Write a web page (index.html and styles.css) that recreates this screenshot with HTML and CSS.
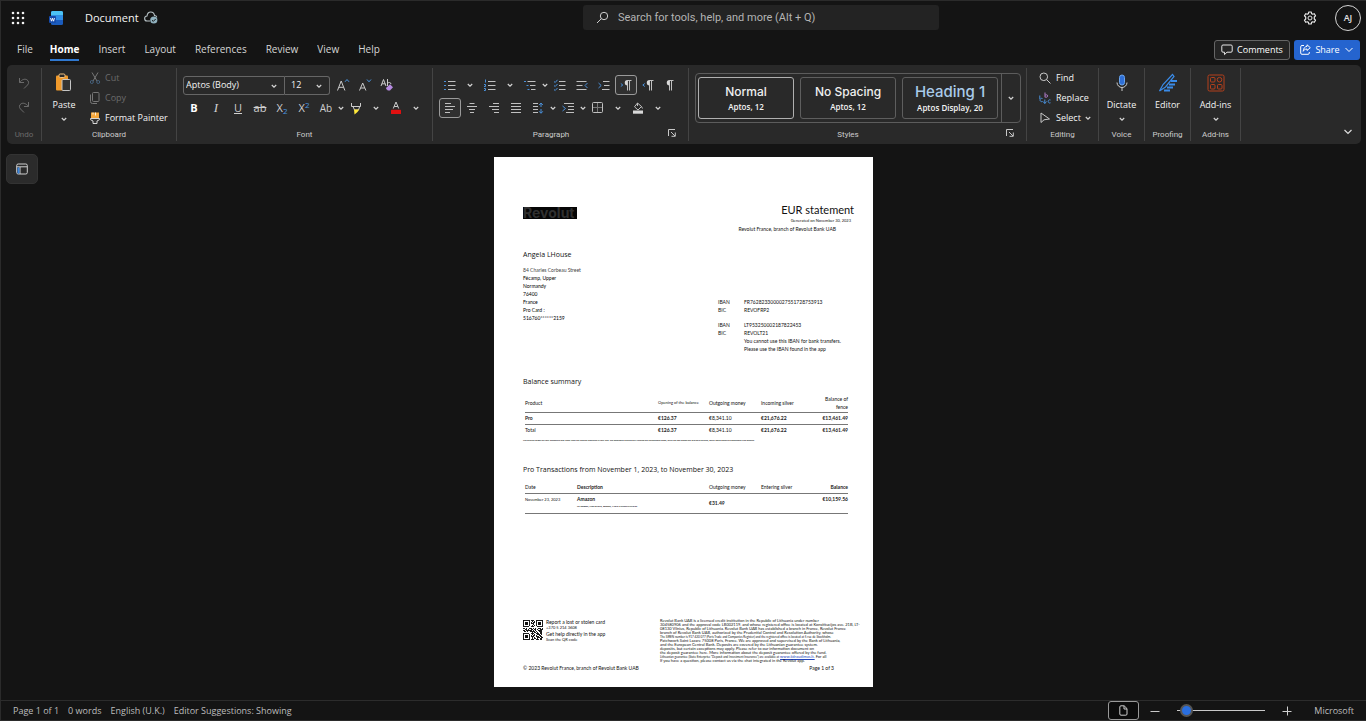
FILE: index.html
```html
<!DOCTYPE html>
<html lang="en">
<head>
<meta charset="utf-8">
<title>Document</title>
<link rel="stylesheet" href="styles.css">
</head>
<body>
<svg class="defs" aria-hidden="true">
  <symbol id="chev" viewBox="0 0 8 8"><path d="M1.8 3 4 5.200 6.200 3" fill="none" stroke="#d6d6d6" stroke-width="1.2"/></symbol>
  <symbol id="launch" viewBox="0 0 8 8"><path d="M7 .5H.5V7M3 3l4 4M7.3 3.5v3.8H3.5" fill="none" stroke="#c8c8c8"/></symbol>
</svg>

<div class="app">
  <header class="topbar">
    <div class="brand">
      <button class="plain" aria-label="App launcher"><svg width="14" height="14" viewBox="0 0 14 14" fill="#f2f2f2"><circle cx="2" cy="2" r="1.3"/><circle cx="7" cy="2" r="1.3"/><circle cx="12" cy="2" r="1.3"/><circle cx="2" cy="7" r="1.3"/><circle cx="7" cy="7" r="1.3"/><circle cx="12" cy="7" r="1.3"/><circle cx="2" cy="12" r="1.3"/><circle cx="7" cy="12" r="1.3"/><circle cx="12" cy="12" r="1.3"/></svg></button>
      <svg class="word" width="16" height="16" viewBox="0 0 16 16"><rect x="3" y="1" width="12" height="14" rx="1.5" fill="#1b5cbd"/><path d="M4.500 1H13.500A1.500 1.500 0 0 1 15 2.500V5.500H3V2.500A1.500 1.500 0 0 1 4.500 1Z" fill="#4cc3f5"/><rect x="3" y="5.500" width="12" height="4.500" fill="#2f8ee8"/><rect x="1" y="6" width="7" height="7" rx="1" fill="#164bab"/><path d="M2.500 8l1 3.200 1-3 1 3 1-3.200" fill="none" stroke="#fff" stroke-width=".9"/></svg>
      <span class="doc-name">Document</span>
      <svg class="cloud" width="14" height="13" viewBox="0 0 14 13"><path d="M6 10H3.300A2.500 2.500 0 0 1 3 5C3.300 2.500 4.800 1 6.800 1S10.200 2.500 10.500 4.500c1.200 0 2 .7 2.300 1.800" fill="none" stroke="#b9c4c8" stroke-width="1.1"/><circle cx="9.800" cy="9" r="3.600" fill="#8fb0bd"/><path d="M8 9.200l1.300 1.200L11.700 8" fill="none" stroke="#141414"/></svg>
    </div>
    <label class="search"><svg width="13" height="13" viewBox="0 0 13 13" fill="none" stroke="#cfcfcf"><circle cx="8" cy="5" r="3.700"/><path d="M5.300 7.700 1 12"/></svg><input type="search" aria-label="Search" placeholder="Search for tools, help, and more (Alt + Q)"></label>
    <div class="account">
      <button class="plain" aria-label="Settings"><svg width="14" height="14" viewBox="0 0 14 14" fill="none" stroke="#e8e8e8"><path stroke-width="1.200" stroke-linejoin="round" d="M5.800 1h2.400l.4 1.600 1.100.6 1.600-.5 1.200 2.100-1.200 1.200v2l1.200 1.200-1.200 2.100-1.600-.5-1.100.6L8.200 13H5.800l-.4-1.600-1.100-.6-1.600.5-1.200-2.100L2.700 8V6L1.500 4.800l1.200-2.100 1.600.5 1.100-.6z"/><circle cx="7" cy="7" r="2"/></svg></button>
      <button class="avatar">AJ</button>
    </div>
  </header>

  <nav class="tabs">
    <button>File</button><button class="on">Home</button><button>Insert</button><button>Layout</button><button>References</button><button>Review</button><button>View</button><button>Help</button>
    <span class="tab-actions">
      <button class="comments"><svg width="12" height="12" viewBox="0 0 12 12" fill="none" stroke="#e6e6e6"><path d="M2 1h8a1.200 1.200 0 0 1 1.200 1.200V7A1.200 1.200 0 0 1 10 8.200H6L3.500 10.600V8.200H2A1.200 1.200 0 0 1 .8 7V2.200A1.200 1.200 0 0 1 2 1z"/></svg>Comments</button>
      <button class="share"><svg width="11" height="11" viewBox="0 0 11 11" fill="none" stroke="#fff"><path d="M4 1.500H2A1.300 1.300 0 0 0 .7 2.800V9A1.300 1.300 0 0 0 2 10.300H8A1.300 1.300 0 0 0 9.300 9V8M7 .8l3.300 2.900L7 6.500V5C5.200 5 4 5.700 3.200 7.300 3.400 4.500 4.700 2.600 7 2.400z"/></svg>Share<svg width="10" height="8" viewBox="0 0 10 8"><path d="M1.500 2 5 5.500 8.500 2" fill="none" stroke="#fff"/></svg></button>
    </span>
  </nav>

  <section class="ribbon" aria-label="Home ribbon">
    <div class="group g-undo">
      <div class="body col">
        <button class="ic tall" aria-label="Undo" disabled><svg width="12" height="12" viewBox="0 0 12 12" fill="none" stroke="#6b6b6b"><path d="M1.500 1v4.500H6M1.500 5.500C4 2.500 6.500 1.500 8.800 2.700c2.200 1.200 2.300 3.800.7 5.300L6 11.500"/></svg></button>
        <button class="ic tall" aria-label="Redo" disabled><svg width="12" height="12" viewBox="0 0 12 12" fill="none" stroke="#6b6b6b"><path d="M10.500 1v4.500H6M10.500 5.500C8 2.500 5.500 1.500 3.200 2.700 1 3.900.9 6.500 2.500 8L6 11.500"/></svg></button>
      </div>
      <div class="label dim">Undo</div>
    </div>

    <div class="group g-clip">
      <div class="body row">
        <button class="big"><svg width="18" height="20" viewBox="0 0 18 20"><rect x="1" y="2.500" width="12" height="15" rx="1" fill="#f09a2b"/><rect x="4" y="1" width="6" height="3.500" rx="1.200" fill="#2a2a2a" stroke="#f6c480"/><rect x="7" y="6.500" width="8.500" height="11" rx="1" fill="#333" stroke="#c6c6c6"/></svg><span>Paste</span><svg class="cv"><use href="#chev"/></svg></button>
        <div class="stack">
          <button disabled><svg width="12" height="12" viewBox="0 0 12 12" fill="none"><path d="M3 .5 8 9M9 .5 4 9" stroke="#777"/><circle cx="2.800" cy="10" r="1.500" stroke="#45617d"/><circle cx="9.200" cy="10" r="1.500" stroke="#45617d"/></svg>Cut</button>
          <button disabled><svg width="12" height="12" viewBox="0 0 12 12" fill="none" stroke="#777"><rect x="3.500" y=".5" width="6.500" height="9" rx="1"/><path d="M1.500 2.500v7a2 2 0 0 0 2 2H8"/></svg>Copy</button>
          <button><svg width="12" height="12" viewBox="0 0 12 12"><path d="M2 .5h8v6H2z" fill="#f5a73c"/><path d="M4 .5v2M6.500.5v3" stroke="#fff0d8"/><path d="M1.500 6.500h9v1.200L8 9v2.500H4V9L1.500 7.700z" fill="#333" stroke="#d5d5d5"/></svg>Format Painter</button>
        </div>
      </div>
      <div class="label">Clipboard</div>
    </div>

    <div class="group g-font">
      <div class="body tools">
        <div class="line">
          <span class="combo family"><select aria-label="Font"><option>Aptos (Body)</option></select><svg class="cv"><use href="#chev"/></svg></span><span class="combo size"><select aria-label="Font size"><option>12</option></select><svg class="cv"><use href="#chev"/></svg></span>
          <button class="ic" aria-label="Grow font"><svg width="14" height="14" viewBox="0 0 14 14" fill="none"><path d="M1.500 12.500 5.200 3l3.700 9.500M2.800 9.300h4.800" stroke="#ccc"/><path d="M9 3.800l2-2.300 2 2.300" stroke="#4a96e0"/></svg></button>
          <button class="ic" aria-label="Shrink font"><svg width="14" height="14" viewBox="0 0 14 14" fill="none"><path d="M1.500 12.500 4.700 5l3.200 7.500M2.800 10h3.900" stroke="#ccc"/><path d="M9 1.500l2 2.300 2-2.300" stroke="#4a96e0"/></svg></button>
          <button class="ic" aria-label="Clear formatting"><svg width="14" height="14" viewBox="0 0 14 14" fill="none"><path d="M1 8 3.500 1.500 6 8M2 5.800h3.200M7.500 1v7M7.500 5.500c.6-1.300 3.500-1.500 3.500.6" stroke="#ccc"/><path d="M6.500 9.500l3.500-3.300 3 3-3 3.300H7.800L6 10.700z" fill="#b58ae0"/></svg></button>
        </div>
        <div class="line">
          <button class="ic glyph b">B</button><button class="ic glyph i">I</button><button class="ic glyph u">U</button><button class="ic glyph s">ab</button><button class="ic glyph">X<sub>2</sub></button><button class="ic glyph">X<sup>2</sup></button><button class="ic glyph ab">Ab</button><button class="dn" aria-label="Change case"><svg class="cv"><use href="#chev"/></svg></button>
          <button class="ic" aria-label="Highlight"><svg width="13" height="13" viewBox="0 0 13 13" fill="none"><path d="M1.500 1v3.500h9V1M3 4.500 4.500 8h4l1.200-3.500" stroke="#ccc"/><path d="M4 7.500h5.200L7.500 10 4.500 12.500z" fill="#ffe83a"/></svg></button><button class="dn wide" aria-label="Highlight colours"><svg class="cv"><use href="#chev"/></svg></button>
          <button class="ic" aria-label="Font colour"><svg width="12" height="14" viewBox="0 0 12 14"><path d="M3.300 7.500 6 1l2.700 6.500M4.200 5.500h3.600" fill="none" stroke="#ccc"/><rect x="1" y="8.800" width="10" height="4.200" rx=".5" fill="#e01010"/></svg></button><button class="dn wide" aria-label="Font colours"><svg class="cv"><use href="#chev"/></svg></button>
        </div>
      </div>
      <div class="label">Font</div>
    </div>

    <div class="group g-para">
      <div class="body tools">
        <div class="line">
          <button class="ic" aria-label="Bullets"><svg class="g"><path d="M4 2.500h7.500M4 6.500h7.500M4 10.500h7.500"/><path class="bl" d="M0 2.500h2M0 6.500h2M0 10.500h2"/></svg></button><button class="dn wide" aria-label="Bullet styles"><svg class="cv"><use href="#chev"/></svg></button>
          <button class="ic" aria-label="Numbering"><svg class="g"><path d="M4 2.500h7.500M4 6.500h7.500M4 10.500h7.500"/><path class="bl" d="M1.500 .5v3M0 5.500h1.500v2H0M0 9.500h1.500v2H0"/></svg></button><button class="dn wide" aria-label="Number styles"><svg class="cv"><use href="#chev"/></svg></button>
          <button class="ic" aria-label="Multilevel list"><svg class="g"><path d="M3.500 2.500h8M6 6.500h5.500M7 10.500h4.500"/><path class="bl" d="M0 2.500h2M2.500 6.500h2M3.500 10.500h2"/></svg></button><button class="dn" aria-label="List styles"><svg class="cv"><use href="#chev"/></svg></button>
          <button class="ic" aria-label="Checklist"><svg class="g"><path d="M5 2.500h6.500M5 6.500h6.500M5 10.500h6.500"/><path class="bl" d="M0 2.500l1.200 1L3.500.8M0 6.500l1.200 1L3.500 5M0 10.500l1.200 1L3.500 9"/></svg></button>
          <button class="ic" aria-label="Decrease indent"><svg class="g"><path d="M.5 2.500h10M.5 6.500h6M.5 10.500h10"/><path class="bl" d="M11.500 4 9 6.500 11.500 9"/></svg></button>
          <button class="ic" aria-label="Increase indent"><svg class="g"><path d="M5 2.500h6.500M6 6.500h5.500M4 10.500h7.500"/><path class="bl" d="M.5 4 3.200 6.500.5 9"/></svg></button>
          <button class="ic sel" aria-label="Left to right"><svg class="g"><path d="M7.500 11.500v-10M9.500 11.500v-10M11.500 1.500H7"/><path class="fl" d="M7.500 1a2.700 2.700 0 0 0 0 5.500z"/><path class="bl" d="M.8 4.500 2.800 6 .8 7.500"/></svg></button>
          <button class="ic" aria-label="Right to left"><svg class="g"><path d="M7.500 11.500v-10M9.500 11.500v-10M11.500 1.500H7"/><path class="fl" d="M7.500 1a2.700 2.700 0 0 0 0 5.500z"/><path class="bl" d="M2.800 4.500.8 6l2 1.500"/></svg></button>
          <button class="ic" aria-label="Show marks"><svg class="g"><path d="M5.500 11.500v-10M7.500 11.500v-10M9.500 1.500H5"/><path class="fl" d="M5.500 1a2.700 2.700 0 0 0 0 5.500z"/></svg></button>
        </div>
        <div class="line">
          <button class="ic sel" aria-label="Align left"><svg class="g"><path d="M1 1.500h6M1 4.500h10M1 7.500h8M1 10.500h5"/></svg></button><button class="ic" aria-label="Centre"><svg class="g"><path d="M3.500 1.500h5M1 4.500h10M3 7.500h6M4 10.500h4"/></svg></button><button class="ic" aria-label="Align right"><svg class="g"><path d="M5 1.500h6M1 4.500h10M4 7.500h7M6 10.500h5"/></svg></button><button class="ic" aria-label="Justify"><svg class="g"><path d="M1 1.500h10M1 4.500h10M1 7.500h10M1 10.500h10"/></svg></button>
          <button class="ic" aria-label="Line spacing"><svg class="g"><path d="M1 1.500h5M1 4.500h5M1 7.500h5M1 10.500h5"/><path class="bl" d="M9 1.500V5M9 7v4M7.200 3 9 1l1.800 2M7.200 9.300 9 11.300l1.800-2"/></svg></button><button class="dn" aria-label="Spacing options"><svg class="cv"><use href="#chev"/></svg></button>
          <button class="ic" aria-label="Indent"><svg class="g"><path d="M2 1.500h10M6 4.500h6M6 7.500h6M4 10.500h8"/><path class="bl" d="M.5 4 3.500 6.500.5 9"/></svg></button><button class="dn" aria-label="Indent options"><svg class="cv"><use href="#chev"/></svg></button>
          <button class="ic" aria-label="Borders"><svg class="g"><rect x=".5" y=".5" width="10" height="10" rx="1"/><path d="M5.500 1v9M1 5.500h9" stroke="#777"/></svg></button><button class="dn wide" aria-label="Border styles"><svg class="cv"><use href="#chev"/></svg></button>
          <button class="ic" aria-label="Shading"><svg class="g"><path d="M5.500 1 9.500 4.500 6 8 2.500 4.800zM5.500 1v3M9.500 4.500l1 2"/><path class="fl" d="M1 8.500h10v3.200H1z"/></svg></button><button class="dn wide" aria-label="Shading colours"><svg class="cv"><use href="#chev"/></svg></button>
        </div>
      </div>
      <div class="label">Paragraph</div>
      <button class="launch" aria-label="Paragraph settings"><svg><use href="#launch"/></svg></button>
    </div>

    <div class="group g-styles">
      <div class="body gallery-wrap">
        <div class="gallery">
          <button class="style cur"><b>Normal</b><small>Aptos, 12</small></button>
          <button class="style"><b>No Spacing</b><small>Aptos, 12</small></button>
          <button class="style head"><b>Heading 1</b><small>Aptos Display, 20</small></button>
          <button class="more" aria-label="More styles"><svg class="cv"><use href="#chev"/></svg></button>
        </div>
      </div>
      <div class="label">Styles</div>
      <button class="launch" aria-label="Style settings"><svg><use href="#launch"/></svg></button>
    </div>

    <div class="group g-edit">
      <div class="body stack">
        <button><svg width="12" height="12" viewBox="0 0 12 12" fill="none" stroke="#c8c8c8"><circle cx="4.800" cy="4.800" r="3.800"/><path d="M7.500 7.500l4 4"/></svg>Find</button>
        <button><svg width="12" height="12" viewBox="0 0 12 12" fill="none"><path d="M6 .5v4.800M6 3.500c.5-1 2.700-1 2.700.4S6.500 5.700 6 4.700" stroke="#b07cc8"/><path d="M3.500 6.500a1.700 1.700 0 1 0 0 3M.8 3.500V7M5.800 7.500v4M4 9.500l1.800 2 1.700-2M11.500 8a1.600 1.600 0 1 0 0 2.800" stroke="#4a90d9"/></svg>Replace</button>
        <button><svg width="12" height="12" viewBox="0 0 12 12" fill="none" stroke="#c8c8c8"><path d="M2 1v9.500l3-2.700 5.500-.8z"/></svg>Select<svg class="cv"><use href="#chev"/></svg></button>
      </div>
      <div class="label">Editing</div>
    </div>
    <div class="group g-big">
      <div class="body"><button class="big"><svg width="18" height="20" viewBox="0 0 18 20" fill="none"><rect x="6.500" y="2" width="5" height="10" rx="2.500" fill="#2f6fd6" stroke="#6aa5ee"/><path d="M4 9.500a5 5 0 0 0 10 0M9 14.500V18" stroke="#ccc"/></svg><span>Dictate</span><svg class="cv"><use href="#chev"/></svg></button></div>
      <div class="label">Voice</div>
    </div>
    <div class="group g-big">
      <div class="body"><button class="big"><svg width="20" height="20" viewBox="0 0 20 20" fill="none"><path d="M1.500 18 5 11.500 14.500 1.500l1.500 2-8.500 10.500zM1.500 18l6-4" stroke="#3a8be8" stroke-width="1.200"/><path d="M13 8h6M11 11.500h6M9 14.500h6M6 17.500h6" stroke="#3a8be8" stroke-width="2"/></svg><span>Editor</span></button></div>
      <div class="label">Proofing</div>
    </div>
    <div class="group g-add">
      <div class="body"><button class="big"><svg width="18" height="20" viewBox="0 0 18 20" fill="none" stroke="#b5401c"><rect x="1" y="2" width="16" height="16" rx="1.500"/><rect x="3.500" y="4.500" width="4.500" height="4.500" rx="1"/><circle cx="12.500" cy="6.700" r="2.300"/><rect x="3.500" y="11.500" width="4.500" height="4.500" rx="1"/><rect x="10.500" y="11.500" width="4.500" height="4.500" rx="1"/></svg><span>Add-ins</span><svg class="cv"><use href="#chev"/></svg></button></div>
      <div class="label">Add-ins</div>
    </div>
    <button class="collapse" aria-label="Collapse ribbon"><svg width="10" height="8" viewBox="0 0 10 8"><path d="M1.500 2 5 5.500 8.500 2" fill="none" stroke="#ddd" stroke-width="1.200"/></svg></button>
  </section>

  <main class="canvas">
    <button class="nav-pane" aria-label="Navigation"><svg width="12" height="12" viewBox="0 0 12 12" fill="none"><rect x=".7" y="1" width="10.600" height="10" rx="1.500" stroke="#d0d0d0"/><path d="M1 3.800h10M4 4v7" stroke="#d0d0d0"/><path d="M2.500 4.500v6" stroke="#3a86e0" stroke-width="2"/></svg></button>
    <article class="page">
      <div class="letterhead">
        <div class="logo">Revolut</div>
        <div class="title"><h1>EUR statement</h1><p class="gen">Generated on November 30, 2023</p><p class="branch">Revolut France, branch of Revolut Bank UAB</p></div>
      </div>
      <h2>Angela LHouse</h2>
      <div class="parties">
        <address><span class="lt">84 Charles Corbeau Street</span><br>Fécamp, Upper<br>Normandy<br>76400<br>France<br>Pro Card :<br>516760******2159</address>
        <dl><dt>IBAN</dt><dd>FR7628233000027551728753913</dd><dt>BIC</dt><dd>REVOFRP2</dd><dt class="gap">IBAN</dt><dd class="gap">LT953250002187822453</dd><dt>BIC</dt><dd>REVOLT21<br>You cannot use this IBAN for bank transfers.<br>Please use the IBAN found in the app</dd></dl>
      </div>
      <h2 class="sum">Balance summary</h2>
      <table class="t1">
        <colgroup><col class="c1"><col class="c2"><col class="c3"><col class="c4"><col></colgroup>
        <thead><tr><th>Product</th><th class="tight">Opening of the balance</th><th>Outgoing money</th><th>Incoming silver</th><th class="r">Balance of<br>fence</th></tr></thead>
        <tbody><tr><td class="m">Pro</td><td class="m">€126.37</td><td>€8,341.10</td><td class="m">€21,676.22</td><td class="r m">€13,461.49</td></tr>
        <tr><td>Total</td><td class="m">€126.37</td><td>€8,341.10</td><td class="m">€21,676.22</td><td class="r m">€13,461.49</td></tr></tbody>
      </table>
      <p class="note">The balance shown on your statement may differ from the balance displayed in your app. The statement balance only reflects the transactions made, while the app shows the available balance, which takes pending transactions into account.</p>
      <h2 class="tx">Pro Transactions from November 1, 2023, to November 30, 2023</h2>
      <table class="t2">
        <colgroup><col class="d1"><col class="d2"><col class="c3"><col class="c4"><col></colgroup>
        <thead><tr><th>Date</th><th class="m">Description</th><th>Outgoing money</th><th>Entering silver</th><th class="r m">Balance</th></tr></thead>
        <tbody><tr><td class="date">November 23, 2023</td><td class="m">Amazon<small>To: amazon, F75018 Paris, amazon, F Card: 516760******2159</small></td><td class="m mid">€31.49</td><td></td><td class="r m">€10,159.56</td></tr></tbody>
      </table>
      <footer class="foot">
        <svg class="qr" viewBox="0 0 21 21" shape-rendering="crispEdges" fill="none" stroke="#111"><path d="M.5.500h6v6h-6zM14.500.500h6v6h-6zM.5 14.500h6v6h-6z"/><path d="M2 3.500h3M16 3.500h3M2 17.500h3" stroke-width="3"/><path stroke-dasharray="2 1 1 2 3 1" d="M8 .5h5M9 1.500h4M8 3.500h5M10 4.500h3M8 6.500h5M0 8.500h21M2 9.500h19M0 11.500h20M1 12.500h20M8 14.500h13M9 15.500h11M8 17.500h13M9 18.500h12M8 20.500h13"/><path stroke-dasharray="1 2 2 1" d="M8 2.500h5M9 5.500h4M1 10.500h19M9 13.500h12M8 16.500h12M9 19.500h12"/></svg>
        <div class="help"><p>Report a lost or stolen card</p><p class="xs">+370 5 214 3608</p><p>Get help directly in the app</p><p class="xs">Scan the QR code</p></div>
        <p class="legal">Revolut Bank UAB is a licensed credit institution in the Republic of Lithuania under number<br>304580906 and the approval code LB002119, and whose registered office is located at Konstitucijos ave. 21B, LT-<br>08130 Vilnius, Republic of Lithuania. Revolut Bank UAB has established a branch in France, Revolut France<br>branch of Revolut Bank UAB, authorized by the Prudential Control and Resolution Authority, whose<br><span>The SIREN number is 917 420 077 (Paris Trade and Companies Register) and the registered office is located at 5 rue de Stockholm.</span><br>Patchwork Saint Lazare 75008 Paris, France. We are approved and supervised by the Bank of Lithuania,<br>and the European Central Bank. Deposits are covered by the Lithuanian guarantee system.<br>deposits, but certain exceptions may apply. Please refer to our information document on<br>the deposit guarantee here. More information about the deposit guarantee offered by the fund.<br><span>Lithuanian guarantee (State Enterprise "Deposit and Investment Insurance") are available at</span> <a href="#">www.iidraudimas.lt.</a> For all<br>If you have a question, please contact us via the chat integrated in the Revolut app.</p>
      </footer>
      <div class="pageline"><span>© 2023 Revolut France, branch of Revolut Bank UAB</span><span>Page 1 of 3</span></div>
    </article>
  </main>

  <footer class="status">
    <span>Page 1 of 1</span><span>0 words</span><span>English (U.K.)</span><span>Editor Suggestions: Showing</span>
    <div class="zoom">
      <button class="view" aria-label="Print layout"><svg width="9" height="11" viewBox="0 0 9 11" fill="none" stroke="#ccc"><path d="M2 .8h3.200L8 3.600V9a1.200 1.200 0 0 1-1.200 1.200H2A1.200 1.200 0 0 1 .8 9V2A1.200 1.200 0 0 1 2 .8zM5 1v3h3"/></svg></button>
      <button class="plain" aria-label="Zoom out"><svg width="10" height="10" viewBox="0 0 10 10"><path d="M.5 5.500h9" stroke="#c8c8c8"/></svg></button>
      <input type="range" min="0" max="100" value="3" aria-label="Zoom">
      <button class="plain" aria-label="Zoom in"><svg width="10" height="10" viewBox="0 0 10 10"><path d="M.5 5.500h9M5.500.5v9" stroke="#d0d0d0"/></svg></button>
      <span class="ms">Microsoft</span>
    </div>
  </footer>
</div>
</body>
</html>
```

FILE: styles.css
```css
* { box-sizing: border-box; }
body { margin: 0; background: #141414; color: #e2e2e2; font: 9px/14px "Open Sans", "Noto Sans", sans-serif; }
button, input, select { font: inherit; color: inherit; background: none; border: 0; padding: 0; margin: 0; }
p, h1, h2, dl, dd { margin: 0; font-weight: 400; }
svg { display: block; flex: none; overflow: visible; }
.defs { position: absolute; width: 0; height: 0; }
.cv { width: 8px; height: 8px; }
.plain { display: flex; }

.app { min-height: 100vh; display: flex; flex-direction: column; border: 1px solid #2b2b2b; border-right: 0; }

.topbar { display: grid; grid-template-columns: 582fr 356fr 427fr; align-items: center; height: 33px; }
.brand { display: flex; align-items: center; padding-left: 10px; }
.word { margin-left: 23px; }
.doc-name { margin-left: 21px; font-size: 11px; color: #f4f4f4; }
.cloud { margin-left: 5px; }
.search { display: flex; align-items: center; gap: 9px; height: 25px; padding: 0 13px; background: #232323; border-radius: 3px; font: 11px/14px Roboto, sans-serif; }
.search input { flex: 1; outline: 0; }
.search input::placeholder { color: #b4b4b4; opacity: 1; }
.account { display: flex; align-items: center; justify-content: flex-end; gap: 18px; padding-right: 5px; }
.avatar { width: 26px; height: 26px; border: 1px solid #d4d4d4; border-radius: 50%; font-weight: 600; }

.tabs { display: flex; align-items: center; gap: 19px; height: 31px; padding: 0 6px 0 16px; font-size: 10px; }
.tabs > button { height: 22px; border-bottom: 2px solid transparent; color: #d6d6d6; }
.tabs > .on { margin-left: -2px; border-color: #2f78d0; color: #fff; font-weight: 700; }
.tab-actions { display: flex; gap: 4px; margin-left: auto; font-size: 9px; font-weight: 500; }
.tab-actions button { display: flex; align-items: center; justify-content: center; gap: 4px; height: 20px; border-radius: 3px; color: #fff; }
.comments { width: 76px; border: 1px solid #666; background: #242424; }
.tab-actions .share { width: 66px; background: #2564cf; }

.ribbon { display: flex; align-items: stretch; height: 79px; margin: 0 5px 0 6px; padding: 3px 0; background: #292929; border-radius: 5px; color: #f4f4f4; font-weight: 500; }
.group { position: relative; display: flex; flex-direction: column; flex: none; border-right: 1px solid #444; }
.body { flex: 1; display: flex; min-height: 0; }
.label { height: 15px; line-height: 17px; text-align: center; font-family: Roboto, sans-serif; font-size: 8px; font-weight: 400; color: #ccc; }
.label.dim { color: #6b6b6b; }
.g-undo { width: 35px; }
.g-clip { width: 135px; }
.g-font { width: 256px; }
.g-para { width: 256px; }
.g-styles { width: 338px; }
.g-para .label, .g-styles .label { padding-right: 19px; }
.g-edit { width: 72px; }
.g-big { width: 46px; }
.g-add { width: 50px; }
.col { flex-direction: column; align-items: center; padding-top: 3px; }
.ic { display: flex; align-items: center; justify-content: center; width: 22px; height: 20px; border-radius: 3px; }
.tall { height: 24px; }
.sel { border: 1px solid #9a9a9a; background: #303030; }
.dn { display: flex; align-items: center; justify-content: center; width: 8px; }
.wide { width: 18px; }
.big { flex: 1; display: flex; flex-direction: column; align-items: center; padding-top: 5px; }
.big span { margin-top: 5px; }
.big .cv { margin-top: 3px; }
.row .big { flex: none; width: 44px; }
.stack { display: flex; flex-direction: column; }
.stack button { display: flex; flex: none; align-items: center; gap: 4px; height: 20px; white-space: nowrap; }
.stack button .cv { margin-left: -2px; }
.g-clip .stack { padding-left: 3px; }
.g-edit .stack { padding-left: 12px; }
.g-edit button { gap: 5px; }
button:disabled { color: #6b6b6b; }

.tools { flex-direction: column; gap: 3px; padding: 7px 0 0 6px; }
.line { display: flex; align-items: center; height: 20px; }
.combo { position: relative; height: 19px; border: 1px solid #666; }
.combo select { appearance: none; width: 100%; height: 100%; padding-left: 2px; }
.combo .cv { position: absolute; right: 6px; top: 5px; pointer-events: none; }
.family { width: 102px; border-radius: 3px 0 0 3px; }
.size { width: 45px; border-left: 0; border-radius: 0 3px 3px 0; margin-right: 2px; }
.size select { padding-left: 6px; }
.glyph { font-size: 11px; font-weight: 400; color: #d0d0d0; }
.b { font-weight: 700; color: #fff; }
.i { font-style: italic; font-family: "Liberation Serif", serif; font-size: 13px; }
.u { text-decoration: underline; }
.s { text-decoration: line-through; }
.ab { font-size: 10px; }
.glyph sub, .glyph sup { font-size: 8px; line-height: 8px; color: #4a96e0; }
.glyph sub { padding-top: 6px; }
.glyph sup { padding-bottom: 6px; }
.g { width: 12px; height: 12px; fill: none; stroke: #c0c0c0; }
.g .bl { stroke: #4a90d9; }
.g .fl { fill: #d8d8d8; stroke: none; }
.launch { position: absolute; right: 12px; bottom: 4px; }
.launch svg { width: 8px; height: 8px; }

.gallery-wrap { padding: 5px 5px 4px 6px; }
.gallery { flex: 1; display: flex; gap: 6px; height: 50px; padding: 3px 0 3px 2px; border: 1px solid #5c5c5c; border-radius: 4px; }
.style { flex: 1; display: flex; flex-direction: column; align-items: center; justify-content: center; border: 1px solid #5e5e5e; border-radius: 3px; }
.style b { font: 500 12px/16px Inter, sans-serif; color: #f0f0f0; }
.style small { font-size: 8px; line-height: 13px; font-weight: 600; }
.cur { border-color: #b0b0b0; }
.head b { font-size: 15px; line-height: 19px; color: #a9cbea; font-weight: 500; }
.more { width: 19px; margin: -3px 0 -3px -3px; border-left: 1px solid #5c5c5c; display: flex; align-items: center; justify-content: center; }
.collapse { margin: auto 8px 5px auto; }

.canvas { flex: 1; display: grid; grid-template-columns: 1fr auto 1fr; align-items: start; padding: 13px 0 12px; }
.nav-pane { width: 32px; height: 30px; margin: -3px 0 0 5px; border: 1px solid #333; border-radius: 5px; background: #2b2b2b; display: flex; align-items: center; justify-content: center; }

.page { width: 379px; min-height: 530px; padding: 46px 19px 12px 29px; background: #fff; color: #111; font: 5px/8px Lato, "Open Sans", sans-serif; }
.letterhead { display: flex; justify-content: space-between; }
.logo { width: 54px; height: 12px; margin-top: 4px; background: #060606; color: #303030; font: 700 14px/12px Inter, sans-serif; }
.title { text-align: right; }
.title h1 { font-size: 11px; line-height: 14px; color: #111; }
.gen { font-size: 4px; margin-right: 3px; }
.branch { margin-right: 18px; }
h2 { margin-top: 17px; font: 7px/10px "Open Sans", sans-serif; }
.parties { display: flex; justify-content: space-between; margin-top: 6px; }
address { font-style: normal; color: #000; }
.lt { color: #444; }
dl { display: grid; grid-template-columns: 26px 110px; align-content: start; margin-top: 32px; }
.gap { margin-top: 7px; }
.sum { margin-top: 24px; }
table { border-collapse: collapse; table-layout: fixed; width: 323px; margin-left: 2px; }
th, td { padding: 2px 0; text-align: left; font-weight: 400; line-height: 7px; white-space: nowrap; border-bottom: 1px solid #777; }
.t1 tr:last-child td { border: 0; }
.t1 { margin-top: 5px; }
.t1 thead th { line-height: 8px; padding: 3px 0 1px; }
th.r, td.r { text-align: right; }
th.m, td.m { font-weight: 700; color: #222; }
th.tight, .date { font-size: 4px; }
.c1 { width: 133px; } .c2 { width: 51px; } .c3 { width: 52px; } .c4 { width: 52px; }
.d1 { width: 52px; } .d2 { width: 132px; }
.note { font: 600 2px/6px "Open Sans", sans-serif; margin-top: 2px; white-space: nowrap; color: #000; }
.tx { margin-top: 21px; }
.t2 { margin-top: 7px; }
.t2 td { height: 20px; vertical-align: top; }
.t2 small { display: block; font: 700 2px/7px "Open Sans", sans-serif; }
.t2 td.mid { vertical-align: middle; }
.foot { display: flex; margin-top: 105px; }
.qr { width: 20px; height: 20px; margin-top: 1px; }
.help { flex: none; width: 114px; margin: 0 0 0 3px; line-height: 6px; white-space: nowrap; }
.help .xs { font-size: 4px; }
.legal { font-size: 4px; line-height: 4px; white-space: nowrap; }
.legal span { font-size: 3px; }
.legal a { color: #2244bb; }
.pageline { display: flex; justify-content: space-between; margin: 1px 20px 0 0; }

.status { display: flex; align-items: center; gap: 9px; height: 20px; padding: 0 12px; border-top: 1px solid #2c2c2c; color: #bdbdbd; }
.zoom { display: flex; align-items: center; margin-left: auto; }
.view { width: 31px; height: 19px; margin-right: 11px; border: 1px solid #9a9a9a; border-radius: 3px; display: flex; align-items: center; justify-content: center; background: #0c0c0c; }
.zoom input { appearance: none; width: 88px; height: 14px; margin: 0 17px 0 17px; background: linear-gradient(#c8c8c8, #c8c8c8) center / 100% 1px no-repeat; }
.zoom input::-webkit-slider-thumb { appearance: none; width: 13px; height: 13px; border: 2px solid #555; border-radius: 50%; background: #2a6fe0; }
.ms { margin-left: 22px; }
```
